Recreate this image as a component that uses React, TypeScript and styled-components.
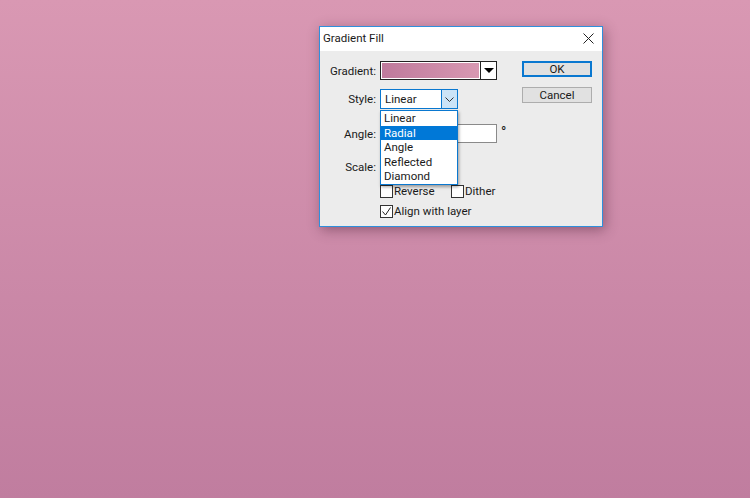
import styled, { createGlobalStyle } from 'styled-components'

const Global = createGlobalStyle`
html, body {
    margin: 0;
    padding: 0;
}
body {
    font-family: Roboto, "Noto Sans", sans-serif;
    font-size: 11.5px;
    color: #1a1a1a;
}
`

const Page = styled.div`
width: 750px;
height: 498px;
overflow: hidden;
background: linear-gradient(180deg, #d998b3 0%, #c07d9f 100%);
padding: 26px 0 0 319px;
box-sizing: border-box;
`

const Dialog = styled.div`
position: relative;
width: 284px;
height: 201px;
box-sizing: border-box;
background: #ececec;
border: 1px solid #2f8fdc;
box-shadow: 2px 3px 12px rgba(70, 30, 50, 0.45);
`

const TitleBar = styled.div`
height: 24px;
background: #fff;
display: flex;
align-items: center;
justify-content: space-between;
padding: 0 8px 2px 3px;
box-sizing: border-box;
`

const Title = styled.span`
font-size: 11.5px;
`

const Body = styled.div`
display: flex;
padding: 10px 10px 0 0;
`

const Form = styled.div`
width: 202px;
flex: none;
`

const Row = styled.div<{ $top?: number; $height: number }>`
display: grid;
grid-template-columns: 56px 1fr;
column-gap: 4px;
align-items: center;
height: ${p => p.$height}px;
margin-top: ${p => p.$top ?? 0}px;
`

const Label = styled.label`
text-align: right;
`

const GradientSwatch = styled.div`
display: flex;
width: 117px;
height: 19px;
box-sizing: border-box;
background: #fff;
border: 1px solid #222;
`

const GradientBar = styled.div`
flex: 1;
margin: 1px;
background: linear-gradient(90deg, #bf7a9c, #d898b2);
`

const SwatchArrow = styled.div`
width: 15px;
display: flex;
align-items: center;
justify-content: center;
border-left: 1px solid #222;
`

const StyleSelect = styled.div`
display: flex;
width: 78px;
height: 20px;
box-sizing: border-box;
background: #fff;
border: 1px solid #0a78d0;
`

const SelectValue = styled.div`
flex: 1;
padding-left: 4px;
line-height: 18px;
`

const SelectArrow = styled.div`
width: 15px;
display: flex;
align-items: center;
justify-content: center;
background: #cce4f7;
border-left: 1px solid #0a78d0;
`

const InputWrap = styled.div`
display: flex;
align-items: center;
gap: 4px;
`

const NumberInput = styled.div<{ $width: number }>`
width: ${p => p.$width}px;
height: 19px;
box-sizing: border-box;
background: #fff;
border: 1px solid #8a8a8a;
`

const Degree = styled.span`
margin-top: -3px;
font-size: 14px;
font-weight: 500;
`

const CheckRow = styled.div<{ $top: number }>`
display: flex;
align-items: center;
height: 14px;
margin-top: ${p => p.$top}px;
margin-left: 60px;
`

const CheckItem = styled.label<{ $width?: number }>`
display: flex;
align-items: center;
gap: 1px;
width: ${p => (p.$width ? `${p.$width}px` : 'auto')};
`

const Box = styled.span`
display: flex;
align-items: center;
justify-content: center;
width: 13px;
height: 13px;
box-sizing: border-box;
background: #fff;
border: 1px solid #333;
`

const Buttons = styled.div`
display: flex;
flex-direction: column;
gap: 10px;
width: 70px;
flex: none;
`

const Button = styled.button<{ $primary?: boolean }>`
width: 70px;
height: 16px;
padding: 0;
box-sizing: border-box;
font: inherit;
line-height: 12px;
color: #1a1a1a;
background: #e1e1e1;
border: ${p => (p.$primary ? '2px solid #0a78d0' : '1px solid #adadad')};
`

const Dropdown = styled.ul`
position: absolute;
left: 60px;
top: 83px;
width: 78px;
height: 75px;
margin: 0;
padding: 0;
box-sizing: border-box;
list-style: none;
background: #fff;
border: 1px solid #0a78d0;
box-shadow: 1px 2px 3px rgba(0, 0, 0, 0.35);
`

const Option = styled.li<{ $active?: boolean }>`
height: 14.6px;
line-height: 14.6px;
padding-left: 3px;
background: ${p => (p.$active ? '#0078d7' : 'transparent')};
color: ${p => (p.$active ? '#fff' : '#1a1a1a')};
`

const App = () => {
    return (
        <Page>
            <Global />
            <Dialog>
                <TitleBar>
                    <Title>Gradient Fill</Title>
                    <svg width="11" height="11" viewBox="0 0 11 11">
                        <path d="M.5.5l10 10M10.5.5l-10 10" stroke="#222" fill="none" />
                    </svg>
                </TitleBar>
                <Body>
                    <Form>
                        <Row $height={19}>
                            <Label>Gradient:</Label>
                            <GradientSwatch>
                                <GradientBar />
                                <SwatchArrow>
                                    <svg width="10" height="5" viewBox="0 0 10 5">
                                        <path d="M0 0h10L5 5z" fill="#000" />
                                    </svg>
                                </SwatchArrow>
                            </GradientSwatch>
                        </Row>
                        <Row $top={9} $height={20}>
                            <Label>Style:</Label>
                            <StyleSelect>
                                <SelectValue>Linear</SelectValue>
                                <SelectArrow>
                                    <svg width="9" height="5" viewBox="0 0 9 5">
                                        <path d="M.5.5l4 4 4-4" stroke="#333" fill="none" />
                                    </svg>
                                </SelectArrow>
                            </StyleSelect>
                        </Row>
                        <Row $top={15} $height={19}>
                            <Label>Angle:</Label>
                            <InputWrap>
                                <NumberInput $width={117} />
                                <Degree>°</Degree>
                            </InputWrap>
                        </Row>
                        <Row $top={14} $height={19}>
                            <Label>Scale:</Label>
                            <InputWrap>
                                <NumberInput $width={60} />
                            </InputWrap>
                        </Row>
                        <CheckRow $top={8}>
                            <CheckItem $width={71}>
                                <Box />
                                Reverse
                            </CheckItem>
                            <CheckItem>
                                <Box />
                                Dither
                            </CheckItem>
                        </CheckRow>
                        <CheckRow $top={6}>
                            <CheckItem>
                                <Box>
                                    <svg width="11" height="11" viewBox="0 0 11 11">
                                        <path d="M1.5 5.5l3 3.5 5-7.5" stroke="#222" fill="none" />
                                    </svg>
                                </Box>
                                Align with layer
                            </CheckItem>
                        </CheckRow>
                    </Form>
                    <Buttons>
                        <Button $primary>OK</Button>
                        <Button>Cancel</Button>
                    </Buttons>
                </Body>
                <Dropdown>
                    <Option>Linear</Option>
                    <Option $active>Radial</Option>
                    <Option>Angle</Option>
                    <Option>Reflected</Option>
                    <Option>Diamond</Option>
                </Dropdown>
            </Dialog>
        </Page>
    )
}

export default App
